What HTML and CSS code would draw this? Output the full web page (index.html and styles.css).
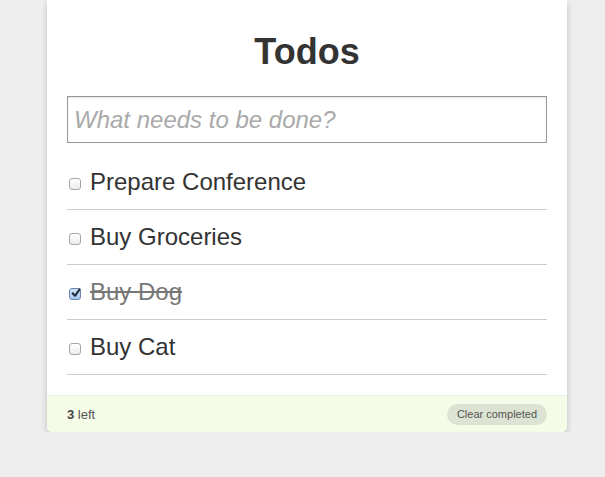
FILE: index.html
```html
<!DOCTYPE html>
<html>
<head>
<meta charset="utf-8">
<title>Todos</title>
<link rel="stylesheet" href="styles.css">
</head>
<body>
<div class="app">
  <h1 class="title">Todos</h1>
  <input class="new-todo" type="text" placeholder="What needs to be done?">
  <ul class="list">
    <li class="item"><span class="check"></span><span class="label">Prepare Conference</span></li>
    <li class="item"><span class="check"></span><span class="label">Buy Groceries</span></li>
    <li class="item done"><span class="check checked"><svg viewBox="0 0 12 12" width="12" height="12"><path d="M2.6 6.2 L5 8.8 L9.6 2.4" fill="none" stroke="#1d2a3c" stroke-width="2" stroke-linecap="round" stroke-linejoin="round"/></svg></span><span class="label">Buy Dog</span></li>
    <li class="item"><span class="check"></span><span class="label">Buy Cat</span></li>
  </ul>
  <div class="stats">
    <span class="count"><b>3</b> left</span>
    <span class="clear">Clear completed</span>
  </div>
</div>
</body>
</html>
```
FILE: styles.css
```css
html, body {
  margin: 0;
  padding: 0;
  background: #eeeeee;
}
body {
  color: #333;
  font-family: "Liberation Sans", Arial, sans-serif;
  font-size: 14px;
}
.app {
  width: 480px;
  margin-left: 47px;
  padding: 0 20px;
  background: #fff;
  border-radius: 0 0 5px 5px;
  box-shadow: rgba(0, 0, 0, 0.2) 0 3px 6px 0;
}
.title {
  margin: 0;
  padding: 34px 0 26px;
  font-size: 36px;
  line-height: 36px;
  font-weight: bold;
  text-align: center;
  color: #333;
}
.new-todo {
  display: block;
  box-sizing: border-box;
  width: 480px;
  height: 47px;
  margin: 0;
  padding: 0 6px;
  font-family: inherit;
  font-size: 24px;
  color: #333;
  border: 1px solid #999;
  outline: none;
  box-shadow: rgba(0, 0, 0, 0.12) 0 1px 2px 0 inset;
}
.new-todo::placeholder {
  font-style: italic;
  color: #a9a9a9;
}
.list {
  list-style: none;
  margin: 12px 0 20px;
  padding: 0;
}
.item {
  display: flex;
  align-items: center;
  height: 54px;
  border-bottom: 1px solid #cccccc;
  font-size: 24px;
}
.check {
  box-sizing: border-box;
  width: 12px;
  height: 12px;
  margin: 4px 9px 0 2px;
  border: 1px solid #a6a6a6;
  border-radius: 3px;
  background: linear-gradient(#ffffff, #ececec);
  position: relative;
}
.check.checked {
  border-color: #6b87b0;
  background: linear-gradient(#cfe2f7, #a9c9ee);
}
.check svg {
  position: absolute;
  left: 0;
  top: -2px;
}
.label {
  line-height: 34px;
}
.done .label {
  color: #777;
  text-decoration: line-through;
}
.stats {
  display: flex;
  align-items: center;
  justify-content: space-between;
  height: 36px;
  margin: 0 -20px;
  padding: 0 20px;
  background: #f4fce8;
  border-top: 1px solid #e8eee0;
  border-radius: 0 0 5px 5px;
  font-size: 13px;
  color: #555;
}
.count b {
  color: #444;
}
.clear {
  display: inline-block;
  height: 21px;
  line-height: 21px;
  padding: 0 10px;
  border-radius: 11px;
  background: #dde3d2;
  font-size: 11px;
  color: #555;
}
```
